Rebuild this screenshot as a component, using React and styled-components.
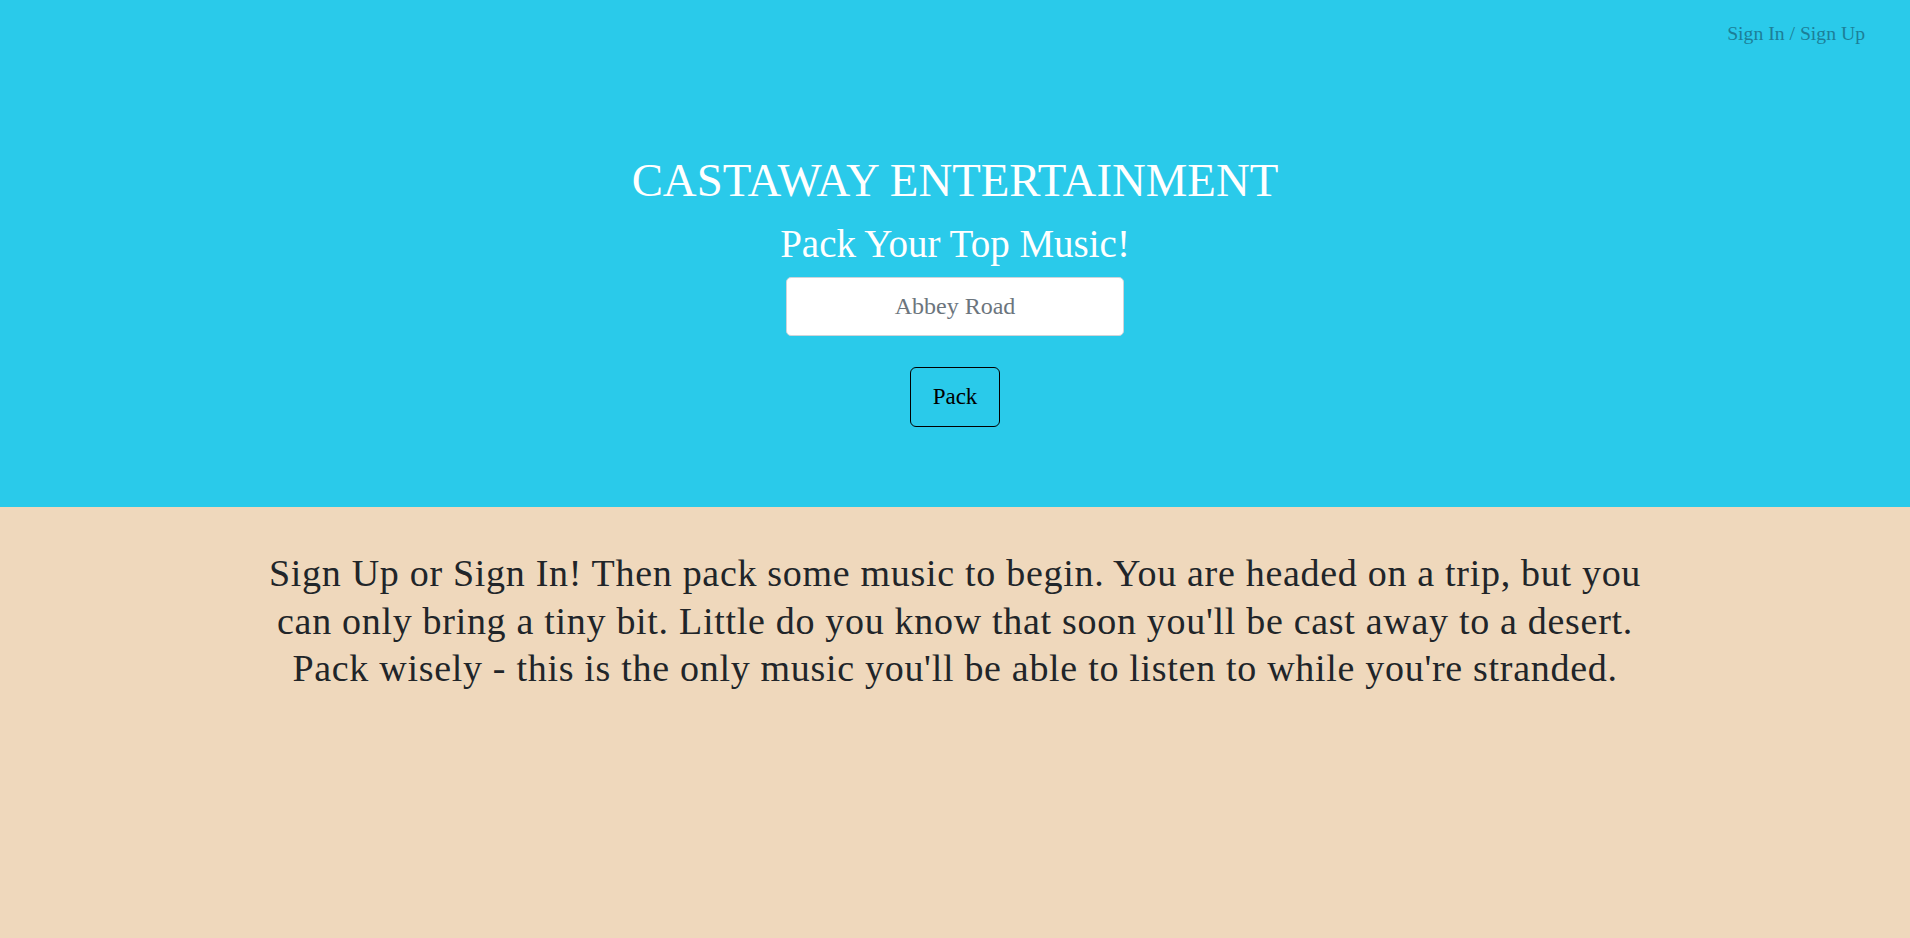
import React from "react";
import styled, { createGlobalStyle } from "styled-components";

const GlobalStyle = createGlobalStyle`
  html, body {
    margin: 0;
    padding: 0;
    background: #efd8bc;
    font-family: "Liberation Serif", "Times New Roman", serif;
    color: #212529;
  }
  * { box-sizing: border-box; }
`;

const Hero = styled.header`
  height: 507px;
  background: #2acaea;
  display: flex;
  flex-direction: column;
  align-items: center;
`;

const Nav = styled.nav`
  align-self: stretch;
  display: flex;
  justify-content: flex-end;
  padding: 23px 45px 0 0;
`;

const NavLink = styled.a`
  font-size: 19.7px;
  line-height: 20px;
  color: #1c7f98;
  text-decoration: none;
  cursor: pointer;
`;

const Title = styled.h1`
  margin: 110px 0 0;
  font-size: 46.8px;
  line-height: 54px;
  font-weight: 400;
  color: #ffffff;
`;

const Subtitle = styled.h2`
  margin: 12px 0 0;
  font-size: 39px;
  line-height: 49px;
  font-weight: 400;
  color: #ffffff;
`;

const SearchInput = styled.input`
  margin-top: 9px;
  width: 338px;
  height: 59px;
  border: 1px solid #ced4da;
  border-radius: 5px;
  background: #ffffff;
  font-family: inherit;
  font-size: 24px;
  text-align: center;
  color: #495057;
  outline: none;
  &::placeholder { color: #6c757d; }
`;

const PackButton = styled.button`
  margin-top: 31px;
  width: 90px;
  height: 60px;
  border: 1px solid #000000;
  border-radius: 6px;
  background: transparent;
  font-family: inherit;
  font-size: 23px;
  color: #000000;
  cursor: pointer;
`;

const Main = styled.main`
  display: flex;
  justify-content: center;
  padding-top: 43px;
  min-height: 431px;
`;

const Intro = styled.p`
  margin: 0;
  max-width: 1400px;
  font-size: 38px;
  line-height: 47.5px;
  letter-spacing: 0.7px;
  text-align: center;
  color: #212529;
`;

export default function App() {
  return (
    <>
      <GlobalStyle />
      <Hero>
        <Nav>
          <NavLink>Sign In / Sign Up</NavLink>
        </Nav>
        <Title>CASTAWAY ENTERTAINMENT</Title>
        <Subtitle>Pack Your Top Music!</Subtitle>
        <SearchInput placeholder="Abbey Road" />
        <PackButton>Pack</PackButton>
      </Hero>
      <Main>
        <Intro>
          Sign Up or Sign In! Then pack some music to begin. You are headed on a trip, but you
          can only bring a tiny bit. Little do you know that soon you'll be cast away to a desert.
          Pack wisely - this is the only music you'll be able to listen to while you're stranded.
        </Intro>
      </Main>
    </>
  );
}
